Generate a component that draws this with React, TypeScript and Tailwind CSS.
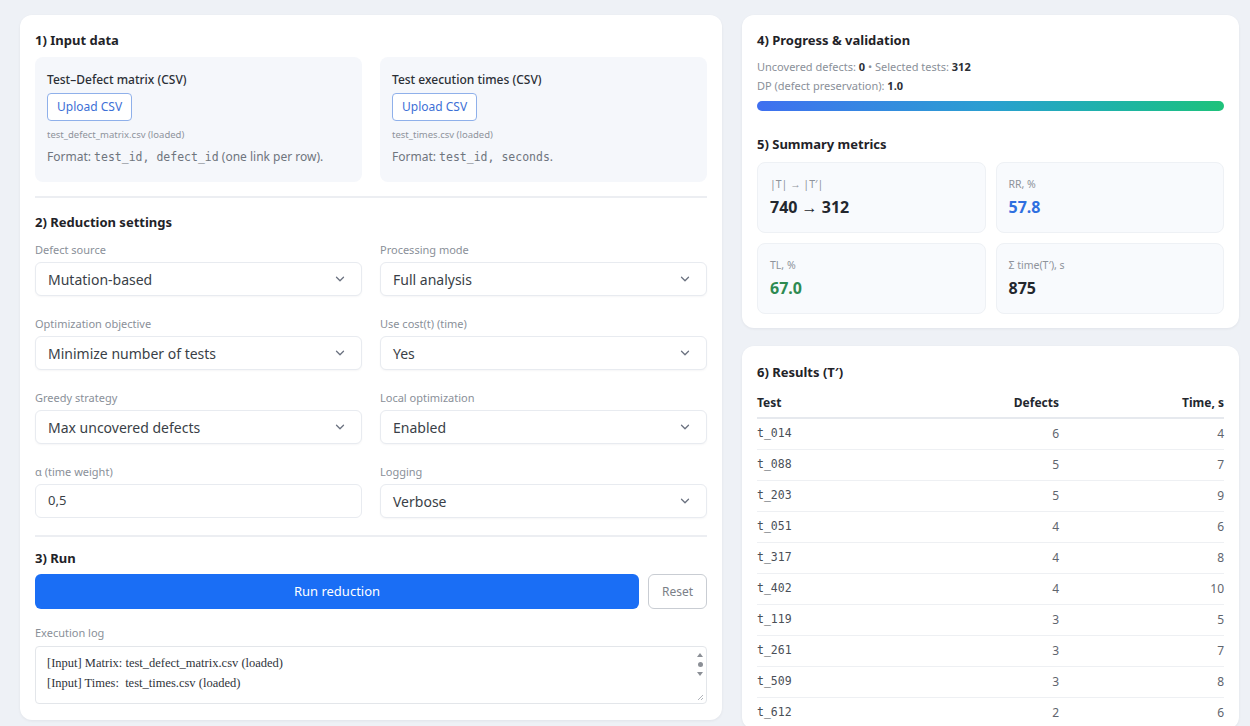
import React from "react";
import { ChevronDown } from "lucide-react";

const font = { fontFamily: '"Noto Sans", "Open Sans", Arial, sans-serif' };
const mono = '[font-family:"DejaVu_Sans_Mono","Liberation_Mono",monospace]';

function Select({ value }: { value: string }) {
  return (
    <div className="flex h-[34px] items-center justify-between rounded-md border border-[#e8ebf0] bg-white pl-3 pr-[14px] text-[14px] text-[#3a3f47] shadow-[0_1px_2px_rgba(16,24,40,0.04)]">
      <span>{value}</span>
      <ChevronDown size={14} strokeWidth={2.2} className="text-[#6b7280]" />
    </div>
  );
}

function Field({ label, children }: { label: string; children: React.ReactNode }) {
  return (
    <div className="flex flex-col">
      <div className="h-[18px] text-[11px] leading-[18px] text-[#8a9099]">{label}</div>
      <div className="mt-[3px]">{children}</div>
    </div>
  );
}

function UploadCard({ title, file, format }: { title: string; file: string; format: React.ReactNode }) {
  return (
    <div className="flex h-[125px] flex-col rounded-lg bg-[#f5f7fb] px-3 pt-[14px]">
      <div className="text-[12px] font-medium leading-[18px] text-[#2b2f36]">{title}</div>
      <div className="mt-[4px]">
        <button className="h-[28px] rounded border border-[#8fb0ea] bg-white px-[9px] text-[12px] text-[#3d6fd6]">
          Upload CSV
        </button>
      </div>
      <div className="mt-[7px] text-[9.5px] leading-[14px] text-[#8e939b]">{file}</div>
      <div className="mt-[6px] text-[12px] leading-[18px] text-[#6f757e]">{format}</div>
    </div>
  );
}

function Metric({ label, value, color }: { label: string; value: string; color: string }) {
  return (
    <div className="flex h-[71px] flex-col rounded-lg border border-[#eef1f5] bg-[#f8fafd] px-3 pt-[13px]">
      <div className="text-[10.5px] leading-[16px] text-[#8e939b]">{label}</div>
      <div className={`mt-[4px] text-[16px] font-bold leading-[22px] ${color}`}>{value}</div>
    </div>
  );
}

const rows: [string, number, number][] = [
  ["t_014", 6, 4],
  ["t_088", 5, 7],
  ["t_203", 5, 9],
  ["t_051", 4, 6],
  ["t_317", 4, 8],
  ["t_402", 4, 10],
  ["t_119", 3, 5],
  ["t_261", 3, 7],
  ["t_509", 3, 8],
  ["t_612", 2, 6],
];

export default function App() {
  return (
    <div style={font} className="h-[726px] w-[1250px] overflow-hidden bg-[#eef1f6]">
      <div className="flex gap-[20px] pl-[20px] pt-[15px]">
        {/* Left column: inputs, settings and run */}
        <div className="flex h-[705px] w-[702px] flex-col rounded-xl bg-white px-[15px] pt-[16px] shadow-[0_1px_3px_rgba(16,24,40,0.06)]">
          <h2 className="text-[13px] font-bold leading-[18px] text-[#1f2328]">1) Input data</h2>
          <div className="mt-[8px] grid grid-cols-2 gap-[18px]">
            <UploadCard
              title="Test–Defect matrix (CSV)"
              file="test_defect_matrix.csv (loaded)"
              format={
                <>
                  Format: <span className={`${mono} text-[11.5px]`}>test_id, defect_id</span> (one link per row).
                </>
              }
            />
            <UploadCard
              title="Test execution times (CSV)"
              file="test_times.csv (loaded)"
              format={
                <>
                  Format: <span className={`${mono} text-[11.5px]`}>test_id, seconds</span>.
                </>
              }
            />
          </div>

          <div className="mt-[14px] h-[2px] bg-[#eceef2]" />

          <h2 className="mt-[15px] text-[13px] font-bold leading-[18px] text-[#1f2328]">2) Reduction settings</h2>
          <div className="mt-[10px] grid grid-cols-2 gap-x-[18px] gap-y-[19px]">
            <Field label="Defect source">
              <Select value="Mutation-based" />
            </Field>
            <Field label="Processing mode">
              <Select value="Full analysis" />
            </Field>
            <Field label="Optimization objective">
              <Select value="Minimize number of tests" />
            </Field>
            <Field label="Use cost(t) (time)">
              <Select value="Yes" />
            </Field>
            <Field label="Greedy strategy">
              <Select value="Max uncovered defects" />
            </Field>
            <Field label="Local optimization">
              <Select value="Enabled" />
            </Field>
            <Field label="α (time weight)">
              <div className="flex h-[34px] items-center rounded-md border border-[#e8ebf0] bg-white px-3 text-[13px] text-[#3a3f47]">
                0,5
              </div>
            </Field>
            <Field label="Logging">
              <Select value="Verbose" />
            </Field>
          </div>

          <div className="mt-[17px] h-[2px] bg-[#eceef2]" />

          <h2 className="mt-[12px] text-[13px] font-bold leading-[18px] text-[#1f2328]">3) Run</h2>
          <div className="mt-[7px] flex gap-[9px]">
            <button className="h-[35px] flex-1 rounded-md bg-[#1a6ef5] text-[13px] text-white">Run reduction</button>
            <button className="h-[35px] w-[59px] rounded-md border border-[#c9cdd3] bg-white text-[12px] text-[#7b8088]">
              Reset
            </button>
          </div>
          <div className="mt-[15px] h-[18px] text-[11px] leading-[18px] text-[#8a9099]">Execution log</div>
          <div className="relative mt-[4px] flex h-[58px] rounded border border-[#e3e6ea] bg-white">
            <div className="flex-1 pl-[11px] pt-[6px] text-[12.5px] leading-[20px] text-[#2f333a] [font-family:'Liberation_Serif','Times_New_Roman',serif]">
              <div>[Input] Matrix: test_defect_matrix.csv (loaded)</div>
              <div>[Input] Times: &nbsp;test_times.csv (loaded)</div>
            </div>
            <div className="flex w-[12px] flex-col items-center pt-[5px] text-[#8b8f96]">
              <svg width="8" height="6" viewBox="0 0 8 6"><path d="M4 1 L7 5 L1 5 Z" fill="currentColor" /></svg>
              <div className="mt-[4px] h-[5px] w-[5px] rounded-full bg-[#8b8f96]" />
              <svg className="mt-[4px]" width="8" height="6" viewBox="0 0 8 6"><path d="M1 1 L7 1 L4 5 Z" fill="currentColor" /></svg>
              <svg className="mt-auto mb-[2px]" width="8" height="8" viewBox="0 0 8 8">
                <path d="M7 2 L2 7 M7 5 L5 7" stroke="#b0b4ba" strokeWidth="1" />
              </svg>
            </div>
          </div>
        </div>

        {/* Right column: progress, metrics and results */}
        <div className="flex w-[497px] flex-col gap-[18px]">
          <div className="flex h-[313px] flex-col rounded-xl bg-white px-[15px] pt-[16px] shadow-[0_1px_3px_rgba(16,24,40,0.06)]">
            <h2 className="text-[13px] font-bold leading-[18px] text-[#1f2328]">4) Progress &amp; validation</h2>
            <div className="mt-[8px] text-[11px] leading-[19px] text-[#8a9099]">
              Uncovered defects: <b className="font-bold text-[#2b2f36]">0</b> • Selected tests:{" "}
              <b className="font-bold text-[#2b2f36]">312</b>
            </div>
            <div className="text-[11px] leading-[19px] text-[#8a9099]">
              DP (defect preservation): <b className="font-bold text-[#2b2f36]">1.0</b>
            </div>
            <div className="mt-[6px] h-[10px] rounded-full bg-gradient-to-r from-[#3f6ff0] via-[#2a9fd0] to-[#1fc27a]" />
            <h2 className="mt-[24px] text-[13px] font-bold leading-[18px] text-[#1f2328]">5) Summary metrics</h2>
            <div className="mt-[9px] grid grid-cols-2 gap-[10px]">
              <Metric label="|T| → |T′|" value="740 → 312" color="text-[#23272e]" />
              <Metric label="RR, %" value="57.8" color="text-[#2e6fe0]" />
              <Metric label="TL, %" value="67.0" color="text-[#2e8a52]" />
              <Metric label="Σ time(T′), s" value="875" color="text-[#23272e]" />
            </div>
          </div>

          <div className="flex flex-1 flex-col rounded-xl bg-white px-[15px] pt-[17px] shadow-[0_1px_3px_rgba(16,24,40,0.06)]">
            <h2 className="text-[13px] font-bold leading-[18px] text-[#1f2328]">6) Results (T′)</h2>
            <table className="mt-[12px] w-full border-collapse text-[12px]">
              <thead>
                <tr className="border-b-2 border-[#e6e9ee] text-[#23272e]">
                  <th className="h-[25px] pb-[4px] text-left font-bold">Test</th>
                  <th className="h-[25px] pb-[4px] text-right font-bold">Defects</th>
                  <th className="h-[25px] w-[165px] pb-[4px] text-right font-bold">Time, s</th>
                </tr>
              </thead>
              <tbody>
                {rows.map(([id, d, t]) => (
                  <tr key={id} className="border-b border-[#eef0f3] text-[#5f656e]">
                    <td className={`h-[31px] ${mono} text-[11.5px] text-[#4a4f57]`}>{id}</td>
                    <td className="h-[31px] text-right">{d}</td>
                    <td className="h-[31px] text-right">{t}</td>
                  </tr>
                ))}
              </tbody>
            </table>
          </div>
        </div>
      </div>
    </div>
  );
}
